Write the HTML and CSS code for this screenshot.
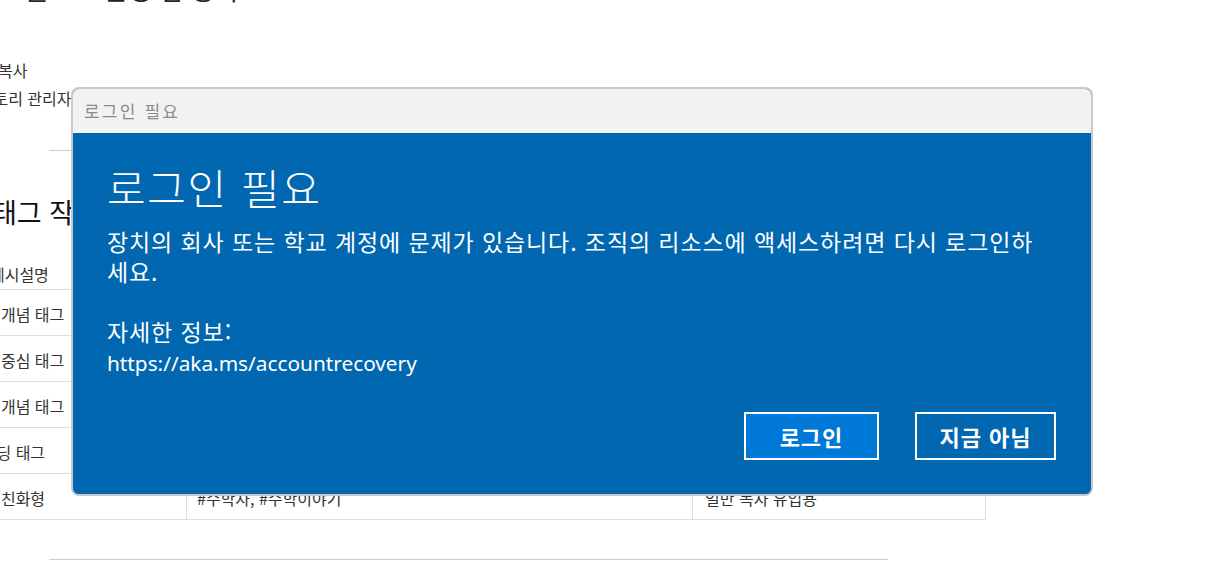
FILE: index.html
```html
<!DOCTYPE html>
<html lang="ko">
<head>
<meta charset="utf-8">
<title>로그인 필요</title>
<link rel="stylesheet" href="styles.css">
</head>
<body>
<main class="doc">
  <h3 class="cut-heading">블로그 운영 팁 정리</h3>
  <ul class="list">
    <li>링크 복사</li>
    <li>히스토리 관리자</li>
  </ul>
  <hr class="rule">
  <h2 class="section">태그 작성 가이드</h2>
  <table class="tags">
    <colgroup><col class="c1"><col class="c2"><col class="c3"></colgroup>
    <thead>
      <tr><th class="hfirst">태그예시설명</th><th></th><th></th></tr>
    </thead>
    <tbody>
      <tr><td>수학 개념 태그</td><td>#피타고라스, #미적분</td><td>개념 검색 유입용</td></tr>
      <tr><td>주제 중심 태그</td><td>#수학사, #수학자</td><td>주제별 분류용</td></tr>
      <tr><td>연관 개념 태그</td><td>#삼각함수, #기하학</td><td>연관 글 노출용</td></tr>
      <tr><td>브랜딩 태그</td><td>#수학노트, #오늘의수학</td><td>블로그 브랜딩용</td></tr>
      <tr><td>검색 친화형</td><td>#수학자, #수학이야기</td><td>일반 독자 유입용</td></tr>
    </tbody>
  </table>
  <hr class="rule rule-bottom">
</main>

<section class="dialog" role="dialog" aria-label="로그인 필요">
  <header class="dialog-title">로그인 필요</header>
  <div class="dialog-body">
    <h1 class="dialog-heading">로그인 필요</h1>
    <p class="dialog-text">장치의 회사 또는 학교 계정에 문제가 있습니다. 조직의 리소스에 액세스하려면 다시 로그인하<br>세요.</p>
    <p class="dialog-text">자세한 정보:<br><span class="url">https://aka.ms/accountrecovery</span></p>
    <div class="dialog-actions">
      <button class="btn btn-primary">로그인</button>
      <button class="btn btn-secondary">지금 아님</button>
    </div>
  </div>
</section>
</body>
</html>
```
FILE: styles.css
```css
html, body {
  margin: 0;
  padding: 0;
  background: #ffffff;
  overflow: hidden;
}

body {
  width: 1231px;
  height: 580px;
  font-family: "Noto Sans CJK KR", "Noto Sans", sans-serif;
  color: #333333;
  position: relative;
}

.doc {
  display: block;
}

.cut-heading {
  margin: -29px 0 0 25px;
  font-size: 26px;
  line-height: 36px;
  font-weight: 400;
  color: #222;
}

.list {
  list-style: none;
  margin: 49px 0 0 -36px;
  padding: 0;
  font-size: 16px;
  line-height: 28px;
}

.rule {
  border: 0;
  border-top: 1px solid #cccccc;
  margin: 38px 0 0 49px;
  width: 839px;
  height: 0;
}

.section {
  margin: 43px 0 0 -8px;
  font-size: 27px;
  line-height: 36px;
  font-weight: 400;
  color: #111;
}

.tags {
  margin: 29px 0 0 -44px;
  border-collapse: collapse;
  table-layout: fixed;
  width: 1029px;
  font-size: 16px;
  color: #333;
}

.tags .c1 { width: 230px; }
.tags .c2 { width: 506px; }
.tags .c3 { width: 293px; }

.tags th {
  height: 30px;
  padding: 0 10px;
  text-align: left;
  font-weight: 400;
  border-bottom: 1px solid #dddddd;
  line-height: 24px;
}

.tags th.hfirst {
  padding-left: 4px;
}

.tags td {
  height: 43px;
  padding: 2px 10px 0;
  border: 1px solid #dddddd;
  line-height: 24px;
  vertical-align: middle;
}

.tags td:nth-child(3) {
  padding-left: 12px;
}

.rule-bottom {
  margin-top: 39px;
}

/* dialog overlay */
.dialog {
  position: absolute;
  left: 71px;
  top: 87px;
  width: 1022px;
  height: 409px;
  box-sizing: border-box;
  border: 2px solid #c9c9c9;
  border-radius: 8px;
  overflow: hidden;
  display: flex;
  flex-direction: column;
  background: #0067b0;
}

.dialog-title {
  height: 44px;
  flex: none;
  background: #f2f2f2;
  color: #8a8a8a;
  font-size: 17px;
  letter-spacing: 2.2px;
  line-height: 44px;
  padding-left: 11px;
}

.dialog-body {
  flex: 1;
  display: flex;
  flex-direction: column;
  background: #0067b0;
  color: #ffffff;
  padding: 29px 35px 34px 34px;
}

.dialog-heading {
  margin: 0;
  font-size: 42px;
  font-weight: 300;
  line-height: 50px;
  letter-spacing: 1.6px;
}

.dialog-text {
  margin: 14px 0 0;
  font-size: 23px;
  line-height: 30px;
  font-weight: 400;
  letter-spacing: 0.9px;
}

.dialog-text + .dialog-text {
  margin-top: 30px;
}

.url {
  font-family: "Noto Sans", "Open Sans", sans-serif;
  font-size: 20.8px;
  letter-spacing: 0;
}

.dialog-actions {
  margin-top: auto;
  display: flex;
  justify-content: flex-end;
  gap: 36px;
}

.btn {
  height: 48px;
  box-sizing: border-box;
  border: 2px solid #ffffff;
  color: #ffffff;
  font-family: "Noto Sans CJK KR", sans-serif;
  font-size: 22px;
  font-weight: 700;
  letter-spacing: 1px;
  padding: 0;
  line-height: 44px;
}

.btn-primary {
  width: 135px;
  background: #0078d7;
}

.btn-secondary {
  width: 141px;
  background: #0067b0;
}
```
